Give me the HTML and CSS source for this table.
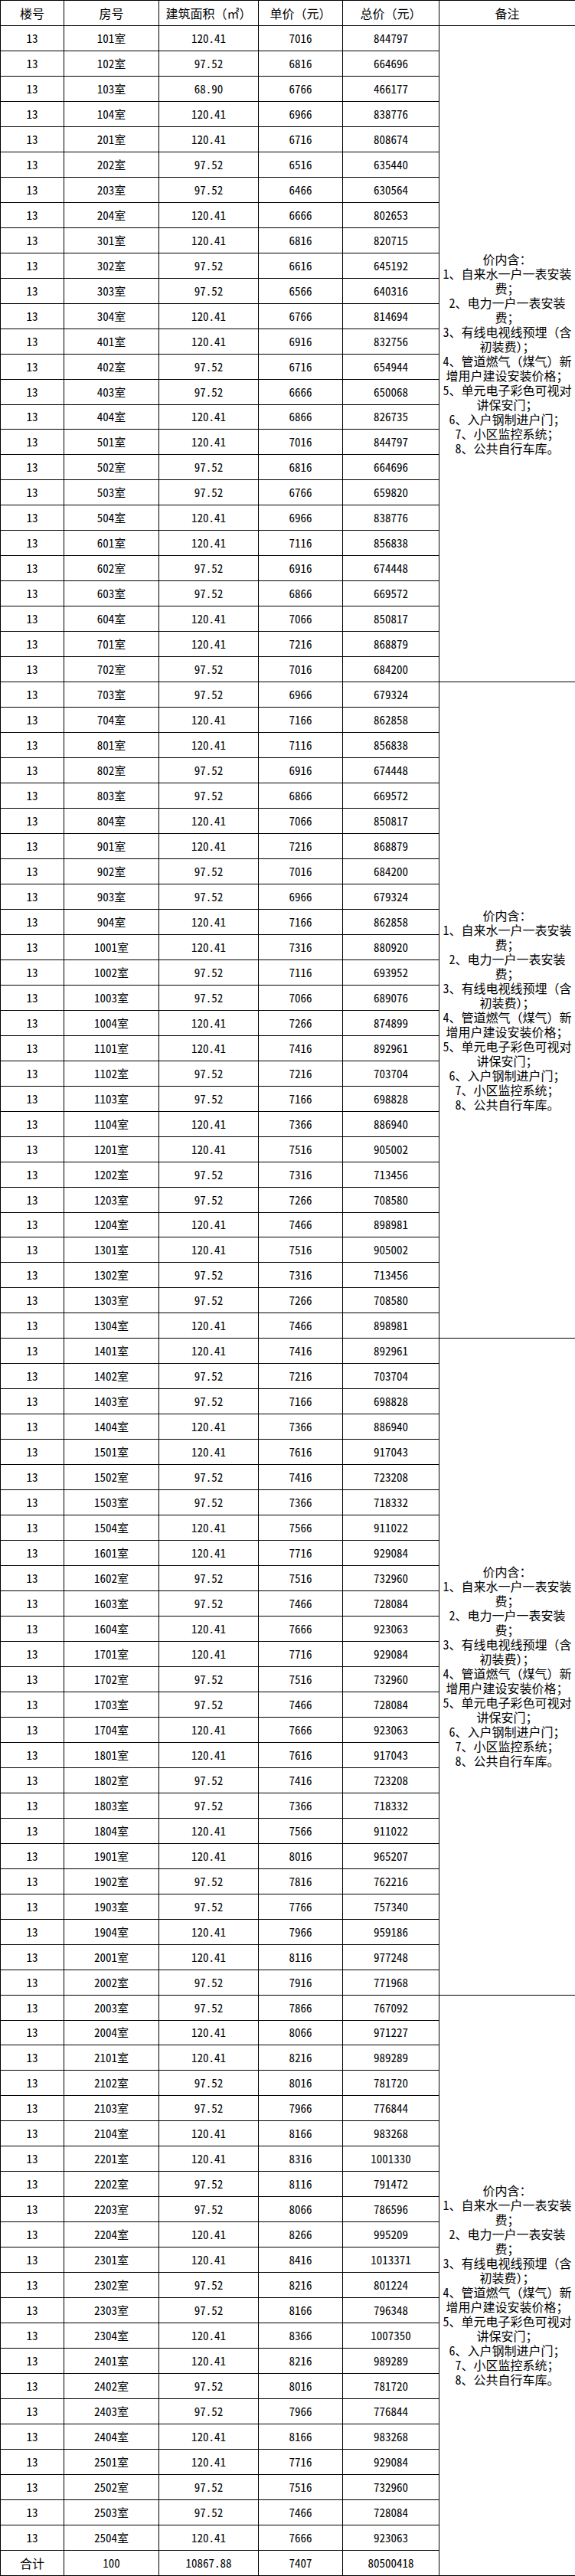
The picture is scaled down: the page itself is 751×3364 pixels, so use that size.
FILE: index.html
```html
<!DOCTYPE html>
<html lang="zh-CN">
<head>
<meta charset="utf-8">
<title>价格表</title>
<link rel="stylesheet" href="styles.css">
</head>
<body>
<table class="price-table">
<colgroup>
<col class="c-bld"><col class="c-room"><col class="c-area"><col class="c-unit"><col class="c-total"><col class="c-note">
</colgroup>
<thead>
<tr><th>楼号</th><th>房号</th><th>建筑面积（㎡）</th><th>单价（元）</th><th>总价（元）</th><th>备注</th></tr>
</thead>
<tbody>
<tr><td>13</td><td>101室</td><td>120.41</td><td>7016</td><td>844797</td><td class="remark" rowspan="26"><div class="note">价内含：<br>1、自来水一户一表安装<br>费；<br>2、电力一户一表安装<br>费；<br>3、有线电视线预埋（含<br>初装费）；<br>4、管道燃气（煤气）新<br>增用户建设安装价格；<br>5、单元电子彩色可视对<br>讲保安门；<br>6、入户钢制进户门；<br>7、小区监控系统；<br>8、公共自行车库。</div></td></tr>
<tr><td>13</td><td>102室</td><td>97.52</td><td>6816</td><td>664696</td></tr>
<tr><td>13</td><td>103室</td><td>68.90</td><td>6766</td><td>466177</td></tr>
<tr><td>13</td><td>104室</td><td>120.41</td><td>6966</td><td>838776</td></tr>
<tr><td>13</td><td>201室</td><td>120.41</td><td>6716</td><td>808674</td></tr>
<tr><td>13</td><td>202室</td><td>97.52</td><td>6516</td><td>635440</td></tr>
<tr><td>13</td><td>203室</td><td>97.52</td><td>6466</td><td>630564</td></tr>
<tr><td>13</td><td>204室</td><td>120.41</td><td>6666</td><td>802653</td></tr>
<tr><td>13</td><td>301室</td><td>120.41</td><td>6816</td><td>820715</td></tr>
<tr><td>13</td><td>302室</td><td>97.52</td><td>6616</td><td>645192</td></tr>
<tr><td>13</td><td>303室</td><td>97.52</td><td>6566</td><td>640316</td></tr>
<tr><td>13</td><td>304室</td><td>120.41</td><td>6766</td><td>814694</td></tr>
<tr><td>13</td><td>401室</td><td>120.41</td><td>6916</td><td>832756</td></tr>
<tr><td>13</td><td>402室</td><td>97.52</td><td>6716</td><td>654944</td></tr>
<tr><td>13</td><td>403室</td><td>97.52</td><td>6666</td><td>650068</td></tr>
<tr><td>13</td><td>404室</td><td>120.41</td><td>6866</td><td>826735</td></tr>
<tr><td>13</td><td>501室</td><td>120.41</td><td>7016</td><td>844797</td></tr>
<tr><td>13</td><td>502室</td><td>97.52</td><td>6816</td><td>664696</td></tr>
<tr><td>13</td><td>503室</td><td>97.52</td><td>6766</td><td>659820</td></tr>
<tr><td>13</td><td>504室</td><td>120.41</td><td>6966</td><td>838776</td></tr>
<tr><td>13</td><td>601室</td><td>120.41</td><td>7116</td><td>856838</td></tr>
<tr><td>13</td><td>602室</td><td>97.52</td><td>6916</td><td>674448</td></tr>
<tr><td>13</td><td>603室</td><td>97.52</td><td>6866</td><td>669572</td></tr>
<tr><td>13</td><td>604室</td><td>120.41</td><td>7066</td><td>850817</td></tr>
<tr><td>13</td><td>701室</td><td>120.41</td><td>7216</td><td>868879</td></tr>
<tr><td>13</td><td>702室</td><td>97.52</td><td>7016</td><td>684200</td></tr>
<tr><td>13</td><td>703室</td><td>97.52</td><td>6966</td><td>679324</td><td class="remark" rowspan="26"><div class="note">价内含：<br>1、自来水一户一表安装<br>费；<br>2、电力一户一表安装<br>费；<br>3、有线电视线预埋（含<br>初装费）；<br>4、管道燃气（煤气）新<br>增用户建设安装价格；<br>5、单元电子彩色可视对<br>讲保安门；<br>6、入户钢制进户门；<br>7、小区监控系统；<br>8、公共自行车库。</div></td></tr>
<tr><td>13</td><td>704室</td><td>120.41</td><td>7166</td><td>862858</td></tr>
<tr><td>13</td><td>801室</td><td>120.41</td><td>7116</td><td>856838</td></tr>
<tr><td>13</td><td>802室</td><td>97.52</td><td>6916</td><td>674448</td></tr>
<tr><td>13</td><td>803室</td><td>97.52</td><td>6866</td><td>669572</td></tr>
<tr><td>13</td><td>804室</td><td>120.41</td><td>7066</td><td>850817</td></tr>
<tr><td>13</td><td>901室</td><td>120.41</td><td>7216</td><td>868879</td></tr>
<tr><td>13</td><td>902室</td><td>97.52</td><td>7016</td><td>684200</td></tr>
<tr><td>13</td><td>903室</td><td>97.52</td><td>6966</td><td>679324</td></tr>
<tr><td>13</td><td>904室</td><td>120.41</td><td>7166</td><td>862858</td></tr>
<tr><td>13</td><td>1001室</td><td>120.41</td><td>7316</td><td>880920</td></tr>
<tr><td>13</td><td>1002室</td><td>97.52</td><td>7116</td><td>693952</td></tr>
<tr><td>13</td><td>1003室</td><td>97.52</td><td>7066</td><td>689076</td></tr>
<tr><td>13</td><td>1004室</td><td>120.41</td><td>7266</td><td>874899</td></tr>
<tr><td>13</td><td>1101室</td><td>120.41</td><td>7416</td><td>892961</td></tr>
<tr><td>13</td><td>1102室</td><td>97.52</td><td>7216</td><td>703704</td></tr>
<tr><td>13</td><td>1103室</td><td>97.52</td><td>7166</td><td>698828</td></tr>
<tr><td>13</td><td>1104室</td><td>120.41</td><td>7366</td><td>886940</td></tr>
<tr><td>13</td><td>1201室</td><td>120.41</td><td>7516</td><td>905002</td></tr>
<tr><td>13</td><td>1202室</td><td>97.52</td><td>7316</td><td>713456</td></tr>
<tr><td>13</td><td>1203室</td><td>97.52</td><td>7266</td><td>708580</td></tr>
<tr><td>13</td><td>1204室</td><td>120.41</td><td>7466</td><td>898981</td></tr>
<tr><td>13</td><td>1301室</td><td>120.41</td><td>7516</td><td>905002</td></tr>
<tr><td>13</td><td>1302室</td><td>97.52</td><td>7316</td><td>713456</td></tr>
<tr><td>13</td><td>1303室</td><td>97.52</td><td>7266</td><td>708580</td></tr>
<tr><td>13</td><td>1304室</td><td>120.41</td><td>7466</td><td>898981</td></tr>
<tr><td>13</td><td>1401室</td><td>120.41</td><td>7416</td><td>892961</td><td class="remark" rowspan="26"><div class="note">价内含：<br>1、自来水一户一表安装<br>费；<br>2、电力一户一表安装<br>费；<br>3、有线电视线预埋（含<br>初装费）；<br>4、管道燃气（煤气）新<br>增用户建设安装价格；<br>5、单元电子彩色可视对<br>讲保安门；<br>6、入户钢制进户门；<br>7、小区监控系统；<br>8、公共自行车库。</div></td></tr>
<tr><td>13</td><td>1402室</td><td>97.52</td><td>7216</td><td>703704</td></tr>
<tr><td>13</td><td>1403室</td><td>97.52</td><td>7166</td><td>698828</td></tr>
<tr><td>13</td><td>1404室</td><td>120.41</td><td>7366</td><td>886940</td></tr>
<tr><td>13</td><td>1501室</td><td>120.41</td><td>7616</td><td>917043</td></tr>
<tr><td>13</td><td>1502室</td><td>97.52</td><td>7416</td><td>723208</td></tr>
<tr><td>13</td><td>1503室</td><td>97.52</td><td>7366</td><td>718332</td></tr>
<tr><td>13</td><td>1504室</td><td>120.41</td><td>7566</td><td>911022</td></tr>
<tr><td>13</td><td>1601室</td><td>120.41</td><td>7716</td><td>929084</td></tr>
<tr><td>13</td><td>1602室</td><td>97.52</td><td>7516</td><td>732960</td></tr>
<tr><td>13</td><td>1603室</td><td>97.52</td><td>7466</td><td>728084</td></tr>
<tr><td>13</td><td>1604室</td><td>120.41</td><td>7666</td><td>923063</td></tr>
<tr><td>13</td><td>1701室</td><td>120.41</td><td>7716</td><td>929084</td></tr>
<tr><td>13</td><td>1702室</td><td>97.52</td><td>7516</td><td>732960</td></tr>
<tr><td>13</td><td>1703室</td><td>97.52</td><td>7466</td><td>728084</td></tr>
<tr><td>13</td><td>1704室</td><td>120.41</td><td>7666</td><td>923063</td></tr>
<tr><td>13</td><td>1801室</td><td>120.41</td><td>7616</td><td>917043</td></tr>
<tr><td>13</td><td>1802室</td><td>97.52</td><td>7416</td><td>723208</td></tr>
<tr><td>13</td><td>1803室</td><td>97.52</td><td>7366</td><td>718332</td></tr>
<tr><td>13</td><td>1804室</td><td>120.41</td><td>7566</td><td>911022</td></tr>
<tr><td>13</td><td>1901室</td><td>120.41</td><td>8016</td><td>965207</td></tr>
<tr><td>13</td><td>1902室</td><td>97.52</td><td>7816</td><td>762216</td></tr>
<tr><td>13</td><td>1903室</td><td>97.52</td><td>7766</td><td>757340</td></tr>
<tr><td>13</td><td>1904室</td><td>120.41</td><td>7966</td><td>959186</td></tr>
<tr><td>13</td><td>2001室</td><td>120.41</td><td>8116</td><td>977248</td></tr>
<tr><td>13</td><td>2002室</td><td>97.52</td><td>7916</td><td>771968</td></tr>
<tr><td>13</td><td>2003室</td><td>97.52</td><td>7866</td><td>767092</td><td class="remark" rowspan="23"><div class="note">价内含：<br>1、自来水一户一表安装<br>费；<br>2、电力一户一表安装<br>费；<br>3、有线电视线预埋（含<br>初装费）；<br>4、管道燃气（煤气）新<br>增用户建设安装价格；<br>5、单元电子彩色可视对<br>讲保安门；<br>6、入户钢制进户门；<br>7、小区监控系统；<br>8、公共自行车库。</div></td></tr>
<tr><td>13</td><td>2004室</td><td>120.41</td><td>8066</td><td>971227</td></tr>
<tr><td>13</td><td>2101室</td><td>120.41</td><td>8216</td><td>989289</td></tr>
<tr><td>13</td><td>2102室</td><td>97.52</td><td>8016</td><td>781720</td></tr>
<tr><td>13</td><td>2103室</td><td>97.52</td><td>7966</td><td>776844</td></tr>
<tr><td>13</td><td>2104室</td><td>120.41</td><td>8166</td><td>983268</td></tr>
<tr><td>13</td><td>2201室</td><td>120.41</td><td>8316</td><td>1001330</td></tr>
<tr><td>13</td><td>2202室</td><td>97.52</td><td>8116</td><td>791472</td></tr>
<tr><td>13</td><td>2203室</td><td>97.52</td><td>8066</td><td>786596</td></tr>
<tr><td>13</td><td>2204室</td><td>120.41</td><td>8266</td><td>995209</td></tr>
<tr><td>13</td><td>2301室</td><td>120.41</td><td>8416</td><td>1013371</td></tr>
<tr><td>13</td><td>2302室</td><td>97.52</td><td>8216</td><td>801224</td></tr>
<tr><td>13</td><td>2303室</td><td>97.52</td><td>8166</td><td>796348</td></tr>
<tr><td>13</td><td>2304室</td><td>120.41</td><td>8366</td><td>1007350</td></tr>
<tr><td>13</td><td>2401室</td><td>120.41</td><td>8216</td><td>989289</td></tr>
<tr><td>13</td><td>2402室</td><td>97.52</td><td>8016</td><td>781720</td></tr>
<tr><td>13</td><td>2403室</td><td>97.52</td><td>7966</td><td>776844</td></tr>
<tr><td>13</td><td>2404室</td><td>120.41</td><td>8166</td><td>983268</td></tr>
<tr><td>13</td><td>2501室</td><td>120.41</td><td>7716</td><td>929084</td></tr>
<tr><td>13</td><td>2502室</td><td>97.52</td><td>7516</td><td>732960</td></tr>
<tr><td>13</td><td>2503室</td><td>97.52</td><td>7466</td><td>728084</td></tr>
<tr><td>13</td><td>2504室</td><td>120.41</td><td>7666</td><td>923063</td></tr>
<tr class="sum"><td class="label">合计</td><td>100</td><td>10867.88</td><td>7407</td><td>80500418</td></tr>
</tbody>
</table>
</body>
</html>
```

FILE: styles.css
```css
html, body {
  margin: 0;
  padding: 0;
  background: #ffffff;
}

.price-table {
  width: 751px;
  table-layout: fixed;
  border-collapse: collapse;
  font-family: "Noto Sans Mono CJK SC", "Noto Sans CJK SC", "DejaVu Sans", sans-serif;
  font-size: 15px;
  color: #000000;
}

.c-bld { width: 83px; }
.c-room { width: 124px; }
.c-area { width: 130px; }
.c-unit { width: 110px; }
.c-total { width: 126px; }
.c-note { width: 178px; }

.price-table tr {
  height: 32.97px;
}

.price-table th,
.price-table td {
  border: 1px solid #000000;
  padding: 0;
  text-align: center;
  vertical-align: middle;
  line-height: 18px;
  white-space: nowrap;
  overflow: hidden;
}

.price-table th {
  font-weight: normal;
  font-size: 16px;
}

.sum .label {
  font-size: 16px;
}

.remark {
  font-size: 16px;
}

.note {
  line-height: 19px;
}
```
